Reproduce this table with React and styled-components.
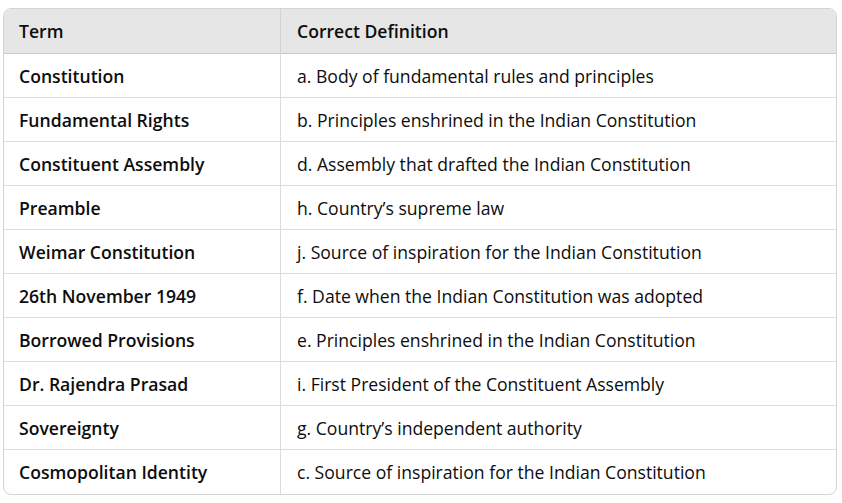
import React from 'react';
import styled, {createGlobalStyle} from 'styled-components';

const rows = [
  ['Constitution', 'a. Body of fundamental rules and principles'],
  ['Fundamental Rights', 'b. Principles enshrined in the Indian Constitution'],
  ['Constituent Assembly', 'd. Assembly that drafted the Indian Constitution'],
  ['Preamble', 'h. Country\u2019s supreme law'],
  ['Weimar Constitution', 'j. Source of inspiration for the Indian Constitution'],
  ['26th November 1949', 'f. Date when the Indian Constitution was adopted'],
  ['Borrowed Provisions', 'e. Principles enshrined in the Indian Constitution'],
  ['Dr. Rajendra Prasad', 'i. First President of the Constituent Assembly'],
  ['Sovereignty', 'g. Country\u2019s independent authority'],
  ['Cosmopolitan Identity', 'c. Source of inspiration for the Indian Constitution'],
];

const App = () => {
  return (
    <>
      <GlobalStyle />
      <Page>
        <Table>
          <HeadCell>Term</HeadCell>
          <HeadCell $last>Correct Definition</HeadCell>
          {rows.map(([term, def], index) => (
            <React.Fragment key={term}>
              <TermCell $bottom={index === rows.length - 1}>{term}</TermCell>
              <DefCell $bottom={index === rows.length - 1}>{def}</DefCell>
            </React.Fragment>
          ))}
        </Table>
      </Page>
    </>
  );
};

const GlobalStyle = createGlobalStyle`
  body {
    margin: 0;
    background: #ffffff;
    font-family: 'Open Sans', 'Noto Sans', sans-serif;
    color: #0d0d0d;
  }
`;

const Page = styled.div`
  padding: 8px 5px 0 3px;
`;

const Table = styled.div`
  display: grid;
  grid-template-columns: 277px 1fr;
  border: 1px solid #d3d3d3;
  border-radius: 8px;
  overflow: hidden;
`;

const Cell = styled.div`
  display: flex;
  align-items: center;
  height: 44px;
  box-sizing: border-box;
  padding: 0 15px;
  font-size: 17.6px;
  line-height: 24px;
  white-space: nowrap;
  border-bottom: ${({$bottom}) => ($bottom ? 'none' : '1px solid #dcdcdc')};
`;

const HeadCell = styled(Cell)`
  height: 45px;
  padding-left: ${({$last}) => ($last ? '16px' : '15px')};
  background: #e6e6e6;
  font-weight: 600;
  border-bottom: 1px solid #c9c9c9;
  border-right: ${({$last}) => ($last ? 'none' : '1px solid #d3d3d3')};
`;

const TermCell = styled(Cell)`
  font-weight: 600;
  border-right: 1px solid #dcdcdc;
`;

const DefCell = styled(Cell)`
  padding-left: 16px;
  font-weight: 400;
`;

export default App;
